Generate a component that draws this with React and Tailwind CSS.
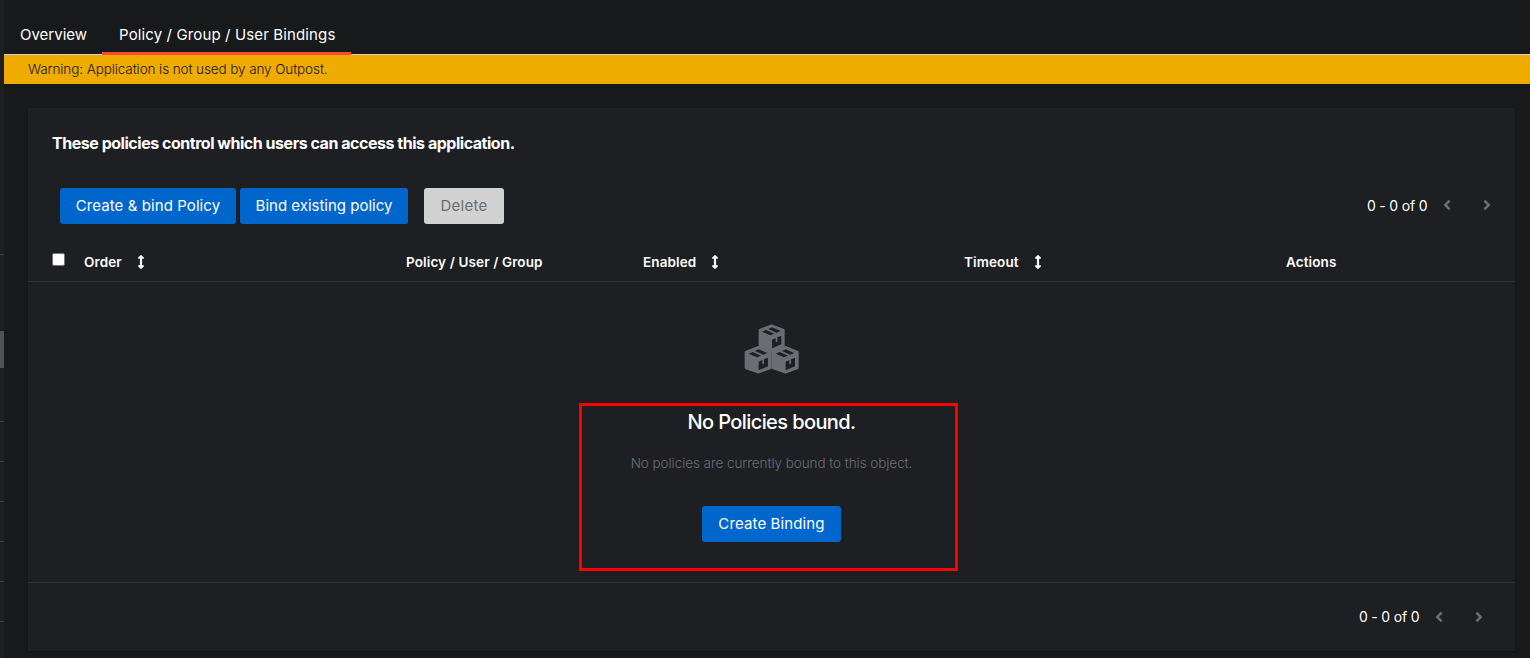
import { FaArrowsAltV, FaAngleLeft, FaAngleRight } from "react-icons/fa";

function Boxes() {
  return (
    <svg viewBox="0 0 168 150" className="mt-[42px] block h-[50px] w-[56px] shrink-0" aria-hidden="true">
      <g fill="#6a6e73" stroke="#6a6e73" strokeWidth="6" strokeLinejoin="round">
        <path d="M83 4 L119 18 V66 L83 82 L47 66 V18Z" />
        <path d="M43 69 L80 84 V132 L43 146 L5 132 V84Z" />
        <path d="M124 69 L161 84 V132 L124 146 L86 132 V84Z" />
      </g>
      <g fill="#1e1f23">
        {["translate(0 0)", "translate(-40 66)", "translate(41 66)"].map((t) => (
          <g key={t} transform={t}>
            <path d="M54 23 L66 18 L91 29 L79 34Z" />
            <path d="M73 15 L84 10 L110 21 L98 26Z" />
            <path d="M84 47 L95 42 V55 L100 53 V40 L112 35 V61 L84 73Z" />
          </g>
        ))}
      </g>
    </svg>
  );
}

function Pager({ className }) {
  return (
    <div className={`flex items-center ${className}`}>
      <span className="-mt-px w-[60px] whitespace-nowrap text-[14px] leading-[20px] tracking-[-0.2px] text-white">0 - 0 of 0</span>
      <FaAngleLeft className="-mt-[2px] ml-[12px] size-4 text-[#6a6e73]" />
      <FaAngleRight className="-mt-[2px] ml-[24px] size-4 text-[#6a6e73]" />
    </div>
  );
}

function Column({ label, sortable }) {
  return (
    <div className="flex items-center whitespace-nowrap">
      <span>{label}</span>
      {sortable && <FaArrowsAltV className="-mt-px ml-[12px] size-[14px]" />}
    </div>
  );
}

function Sidebar() {
  return (
    <div className="flex w-1 shrink-0 flex-col bg-[#1e1f23]">
      <div className="h-[255px] border-b border-[#3c3f42]" />
      <div className="mt-[76px] h-[37px] bg-[#4f5255]" />
      <div className="h-[54px] border-b border-[#3c3f42]" />
      {[1, 2, 3, 4, 5].map((n) => (
        <div key={n} className="h-[40px] border-b border-[#3c3f42]" />
      ))}
    </div>
  );
}

export default function App() {
  return (
    <div className="flex h-[658px] w-[1530px] overflow-hidden bg-[#18191a] font-['Inter','Liberation_Sans',sans-serif] text-white">
      <Sidebar />
      <main className="flex min-w-0 flex-1 flex-col">
        <nav className="flex h-[55px] shrink-0 border-b border-[#d2d2d2] text-[15px] leading-6">
          <div className="w-[98px] pl-4 pt-[23px]">Overview</div>
          <div className="-mb-px w-[249px] whitespace-nowrap border-b-[3px] border-[#ff4b33] pl-[17px] pt-[23px] tracking-[0.13px]">Policy / Group / User Bindings</div>
        </nav>
        <div className="flex h-[29px] shrink-0 items-center bg-[#f0ab00] pl-6 text-[13.5px] font-light tracking-[-0.1px] text-[#151515]">
          Warning: Application is not used by any Outpost.
        </div>
        <section className="ml-6 mt-6 flex h-[543px] w-[1487px] shrink-0 flex-col bg-[#1e1f23] shadow-[0_1px_2px_rgba(3,3,3,0.3)]">
          <h2 className="ml-6 mt-[23px] h-6 whitespace-nowrap text-[16px] font-bold leading-6 tracking-[-0.47px]">These policies control which users can access this application.</h2>
          <div className="mt-[33px] flex h-9 items-center pl-8 text-[15px]">
            <button className="h-9 w-[176px] whitespace-nowrap rounded-[3px] bg-[#0066cc] tracking-[0.08px]">Create &amp; bind Policy</button>
            <button className="ml-1 h-9 w-[168px] whitespace-nowrap rounded-[3px] bg-[#0066cc]">Bind existing policy</button>
            <button className="ml-4 h-9 w-20 rounded-[3px] bg-[#d2d2d2] tracking-[0.25px] text-[#6a6e73]">Delete</button>
            <Pager className="ml-auto mr-[20px]" />
          </div>
          <div className="grid h-[58px] grid-cols-[32px_322px_237px_321px_322px_1fr] items-center border-b border-[#2f3135] pl-6 pt-[19px] text-[13.5px] font-semibold tracking-[0.12px]">
            <span className="-mt-[6px] size-[13px] rounded-[2px] border border-[#767676] bg-white" />
            <Column label="Order" sortable />
            <Column label="Policy / User / Group" />
            <Column label="Enabled" sortable />
            <Column label="Timeout" sortable />
            <Column label="Actions" />
          </div>
          <div className="relative flex h-[301px] flex-col items-center border-b border-[#2f3135]">
            <Boxes />
            <h3 className="mt-[33px] h-[30px] text-[20px] font-medium leading-[30px] tracking-[-0.6px]">No Policies bound.</h3>
            <p className="mt-4 h-[21px] text-[13.5px] font-light leading-[21px] tracking-[-0.07px] text-[#6a6e73]">No policies are currently bound to this object.</p>
            <button className="mt-[32px] h-9 w-[139px] shrink-0 rounded-[3px] bg-[#0066cc] text-[15px] tracking-[0.12px]">Create Binding</button>
            <div className="absolute left-[551px] top-[121px] h-[168px] w-[379px] border-[3px] border-[#ff0000]" />
          </div>
          <Pager className="ml-auto mr-[28px] mt-[25px]" />
        </section>
      </main>
    </div>
  );
}
